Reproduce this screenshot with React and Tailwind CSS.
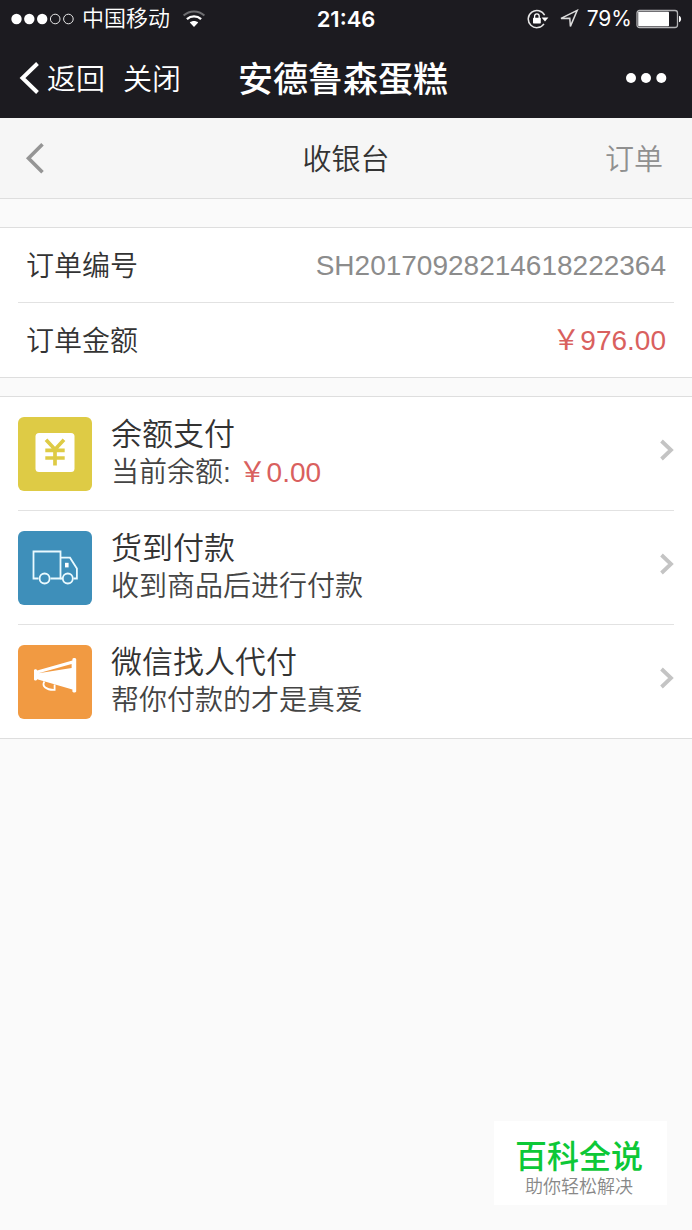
import React from 'react';

function SignalDots() {
  return (
    <svg viewBox="0 0 64 12" className="h-3 w-16 shrink-0" fill="#fff" aria-hidden="true">
      <circle cx="6.5" cy="6" r="5.2" />
      <circle cx="19.3" cy="6" r="5.2" />
      <circle cx="32.2" cy="6" r="5.2" />
      <g fill="none" stroke="#e8e8e8" strokeWidth="1">
        <circle cx="45.2" cy="6" r="4.8" />
        <circle cx="58.4" cy="6" r="4.8" />
      </g>
    </svg>
  );
}

function WifiIcon() {
  return (
    <svg viewBox="0 0 24 18" className="h-[18px] w-6 shrink-0" fill="none" aria-hidden="true">
      <path d="M1.6 5.6C7.5 0.2 16.5 0.2 22.4 5.6" stroke="#6d6d70" strokeWidth="2" />
      <path d="M4.9 9.2C9 5.5 15 5.5 19.1 9.2" stroke="#fff" strokeWidth="2.3" />
      <path d="M12 17L7.8 12.6C10 10.6 14 10.6 16.2 12.6Z" fill="#fff" />
    </svg>
  );
}

function RotationLockIcon() {
  return (
    <svg viewBox="0 0 22 20" className="h-5 w-[22px] shrink-0" fill="none" aria-hidden="true">
      <path d="M17.6 6.3A8.6 8.6 0 1 0 17 14.8" stroke="#e6e6e6" strokeWidth="1.5" />
      <path d="M14.6 8.6H21.4L18 12.6Z" fill="#fff" />
      <rect x="6" y="8.8" width="7.8" height="5.6" rx="0.6" fill="#fff" />
      <path d="M7.6 9V7.2a2.3 2.3 0 0 1 4.6 0V9" stroke="#fff" strokeWidth="1.3" />
    </svg>
  );
}

function LocationIcon() {
  return (
    <svg viewBox="0 0 20 20" className="size-5 shrink-0" fill="none" aria-hidden="true">
      <path d="M2 9.4L18.2 1.4L11.4 17.4L10.8 9.2Z" stroke="#dcdcdc" strokeWidth="1.5" strokeLinejoin="miter" />
    </svg>
  );
}

function BatteryIcon() {
  return (
    <svg viewBox="0 0 46 20" className="h-5 w-[46px] shrink-0" fill="none" aria-hidden="true">
      <rect x="1" y="1.5" width="40.5" height="17" rx="2.5" stroke="#b4b4b6" strokeWidth="1.3" />
      <rect x="2.2" y="2.7" width="30.8" height="14.6" rx="0.8" fill="#fff" />
      <path d="M43 6.8C45.8 7.4 45.8 12.6 43 13.2Z" fill="#fff" />
    </svg>
  );
}

function YenIcon() {
  return (
    <svg viewBox="0 0 74 74" className="size-full" aria-hidden="true">
      <rect x="17.5" y="16" width="39" height="39" rx="3.5" fill="#fff" />
      <path
        d="M28 22.8L37 32.4L46 22.8M37 31.5V48.5M27.3 33.4H46.7M27.3 41H46.7"
        fill="none"
        stroke="#decb45"
        strokeWidth="3.7"
      />
    </svg>
  );
}

function TruckIcon() {
  return (
    <svg viewBox="0 0 74 74" className="size-full" fill="none" stroke="#eafaff" strokeWidth="1.8" aria-hidden="true">
      <path d="M20.5 47.5H15.5V20.5H42.5V47.5H32.5" />
      <path d="M42.5 26.7H52L58.9 37.5V47.5H55.5M42.5 47.5H44.5" />
      <circle cx="26.6" cy="47.5" r="5" />
      <circle cx="49.8" cy="47.5" r="5" />
      <rect x="47" y="31.8" width="3.6" height="4.6" fill="#fff" stroke="none" />
    </svg>
  );
}

function MegaphoneIcon() {
  return (
    <svg viewBox="0 0 74 74" className="size-full" aria-hidden="true">
      <path d="M54.4 14C55 12.8 57.6 12.8 58.2 14V46.4C57.6 47.8 55 47.8 54.4 46.4V44.6L19.2 34.3C18.7 36 16.4 36 16 34.6V25.2C16.4 23.8 18.7 23.8 19.2 25.4L54.4 15.4Z" fill="#fff" />
      <path d="M20.5 28.2L53.6 18.9V23Z" fill="#f19a42" />
      <path d="M26.4 36.4C23.5 41 28.2 45.2 36.6 44.8V39.6" fill="none" stroke="#fff" strokeWidth="1.8" />
    </svg>
  );
}

function StatusBar() {
  return (
    <div className="grid h-[38px] grid-cols-[1fr_auto_1fr] items-center px-2.5">
      <div className="flex items-center">
        <SignalDots />
        <span className="ml-2 text-[22px] leading-6 font-[350]">中国移动</span>
        <span className="ml-3 flex">
          <WifiIcon />
        </span>
      </div>
      <time className="font-[Inter,sans-serif] text-[22px] leading-6 font-semibold">21:46</time>
      <div className="flex items-center justify-end">
        <RotationLockIcon />
        <span className="ml-2.5 flex">
          <LocationIcon />
        </span>
        <span className="mr-1 ml-2 font-[Inter,sans-serif] text-[21px] leading-6">79%</span>
        <BatteryIcon />
      </div>
    </div>
  );
}

function BrowserBar() {
  return (
    <div className="flex h-20 items-center pr-6 pl-[18px]">
      <div className="flex flex-1 items-center text-[29px] leading-10 font-[350]">
        <button type="button" className="flex items-center">
          <svg viewBox="0 0 22 34" className="mr-[7px] h-[34px] w-[22px]" fill="none" aria-hidden="true">
            <path d="M19.5 2.5L4.5 17L19.5 31.5" stroke="#fff" strokeWidth="4" />
          </svg>
          <span className="pt-1">返回</span>
        </button>
        <button type="button" className="ml-[18px] pt-1">
          关闭
        </button>
      </div>
      <h1 className="pt-1 text-[35px] leading-10 font-medium">安德鲁森蛋糕</h1>
      <div className="flex flex-1 justify-end">
        <button type="button" aria-label="更多" className="flex">
          <svg viewBox="0 0 44 12" className="h-3 w-11" fill="#fff" aria-hidden="true">
            <circle cx="7" cy="6" r="5" />
            <circle cx="22" cy="6" r="5" />
            <circle cx="37.3" cy="6" r="5" />
          </svg>
        </button>
      </div>
    </div>
  );
}

function PageHeader() {
  return (
    <div className="flex h-[81px] items-center border-b border-[#dedede] bg-[#f6f6f6] px-[29px] text-[29px] leading-10 font-[350]">
      <div className="flex flex-1">
        <button type="button" aria-label="返回" className="-ml-1 flex">
          <svg viewBox="0 0 22 32" className="h-8 w-[22px]" fill="none" aria-hidden="true">
            <path d="M17.5 2.3L3.5 16.3L17.5 30.3" stroke="#959595" strokeWidth="3.6" />
          </svg>
        </button>
      </div>
      <h2 className="pt-1 text-[#333]">收银台</h2>
      <div className="flex flex-1 justify-end">
        <a href="#orders" className="pt-1 text-[#909090]">
          订单
        </a>
      </div>
    </div>
  );
}

function OrderInfo() {
  return (
    <dl className="mt-7 border-y border-[#dedede] bg-white px-[18px] text-[28px] leading-10">
      <div className="flex h-[75px] items-center justify-between border-b border-[#e2e2e2] px-2">
        <dt className="pt-1 font-[350] text-[#333]">订单编号</dt>
        <dd className="pt-0.5 text-[#8c8c8c]">SH20170928214618222364</dd>
      </div>
      <div className="flex h-[74px] items-center justify-between px-2">
        <dt className="pt-1 font-[350] text-[#333]">订单金额</dt>
        <dd className="pt-0.5 text-[#d9605e]">￥976.00</dd>
      </div>
    </dl>
  );
}

const methods = [
  {
    id: 'balance',
    title: '余额支付',
    note: '当前余额: ',
    amount: '￥0.00',
    tile: 'bg-[#decb45]',
    Icon: YenIcon,
  },
  { id: 'delivery', title: '货到付款', note: '收到商品后进行付款', tile: 'bg-[#3e8fba]', Icon: TruckIcon },
  { id: 'wechat', title: '微信找人代付', note: '帮你付款的才是真爱', tile: 'bg-[#f19a42]', Icon: MegaphoneIcon },
];

function PaymentMethods() {
  return (
    <ul className="mt-[18px] border-y border-[#dedede] bg-white px-[18px]">
      {methods.map(({ id, title, note, amount, tile, Icon }) => (
        <li key={id} className="border-b border-[#e2e2e2] last:border-b-0">
          <a href={`#${id}`} className="flex h-[113px] items-center">
            <span className={`size-[74px] shrink-0 overflow-hidden rounded-md ${tile}`}>
              <Icon />
            </span>
            <span className="ml-[19px] flex flex-1 flex-col font-[350]">
              <span className="text-[31px] leading-[38px] text-[#333]">{title}</span>
              <span className="text-[28px] leading-[38px] text-[#444]">
                {note}
                {amount && <span className="font-normal text-[#d9605e]">{amount}</span>}
              </span>
            </span>
            <svg viewBox="0 0 16 22" className="mb-2 h-[22px] w-4 shrink-0" fill="none" aria-hidden="true">
              <path d="M3.5 2L13 11L3.5 20" stroke="#c4c4c4" strokeWidth="3.8" />
            </svg>
          </a>
        </li>
      ))}
    </ul>
  );
}

export default function App() {
  return (
    <div className="relative min-h-screen bg-[#fafafa] font-['Liberation_Sans','Noto_Sans_CJK_SC',sans-serif]">
      <header className="bg-[#1c1b20] text-white">
        <StatusBar />
        <BrowserBar />
      </header>
      <main>
        <PageHeader />
        <OrderInfo />
        <PaymentMethods />
      </main>
      <aside className="absolute right-[25px] bottom-[25px] flex flex-col items-center bg-white pt-[18px] pr-6 pb-1.5 pl-[21px]">
        <strong className="text-[32px] leading-9 font-medium text-[#0dc837]">百科全说</strong>
        <span className="text-[18px] leading-6 font-[350] text-[#888]">助你轻松解决</span>
      </aside>
    </div>
  );
}
